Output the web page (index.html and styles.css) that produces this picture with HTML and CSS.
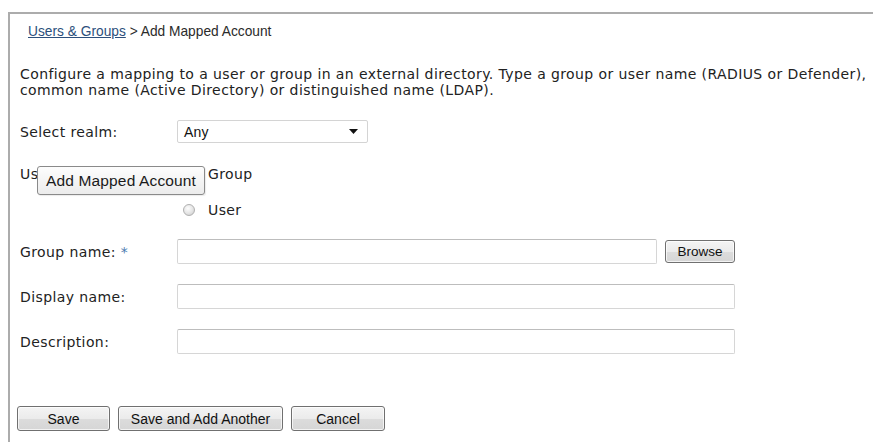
FILE: index.html
```html
<!DOCTYPE html>
<html>
<head>
<meta charset="utf-8">
<title>Add Mapped Account</title>
<link rel="stylesheet" href="styles.css">
</head>
<body>
<div class="panel">
  <div class="crumbs"><a href="#" class="crumb-link">Users &amp; Groups</a> &gt; Add Mapped Account</div>

  <p class="intro">Configure a mapping to a user or group in an external directory. Type a group or user name (RADIUS or Defender),<br>common name (Active Directory) or distinguished name (LDAP).</p>

  <div class="form">
    <div class="row row-realm">
      <label class="lbl">Select realm:</label>
      <div class="select">
        <span>Any</span>
        <svg class="caret" width="9" height="5" viewBox="0 0 9 5"><path d="M0 0h9L4.5 5z" fill="#111"/></svg>
      </div>
    </div>

    <div class="row row-type">
      <span class="lbl">User type:</span>
      <div class="radios">
        <label class="radio-opt"><span class="radio"></span>Group</label>
        <label class="radio-opt"><span class="radio"></span>User</label>
      </div>
      <div class="tooltip">Add Mapped Account</div>
    </div>

    <div class="row row-field">
      <label class="lbl">Group name: <span class="req">*</span></label>
      <div class="field-line">
        <input class="text short" type="text">
        <button class="btn browse" type="button">Browse</button>
      </div>
    </div>

    <div class="row row-field">
      <label class="lbl">Display name:</label>
      <input class="text" type="text">
    </div>

    <div class="row row-field">
      <label class="lbl">Description:</label>
      <input class="text" type="text">
    </div>
  </div>

  <div class="actions">
    <button class="btn act save" type="button">Save</button>
    <button class="btn act another" type="button">Save and Add Another</button>
    <button class="btn act cancel" type="button">Cancel</button>
  </div>
</div>
</body>
</html>
```

FILE: styles.css
```css
html, body {
  margin: 0;
  padding: 0;
  background: #fff;
}

body {
  font-family: "DejaVu Sans", Verdana, sans-serif;
  font-size: 14px;
  letter-spacing: 0.4px;
  color: #222;
}

.panel {
  margin: 12px 0 0 8px;
  border-top: 2px solid #acacac;
  border-left: 2px solid #acacac;
  min-height: 440px;
  box-sizing: border-box;
}

.crumbs {
  font-family: "Liberation Sans", Tahoma, sans-serif;
  font-size: 13.75px;
  letter-spacing: 0;
  color: #2b2b2b;
  padding: 10px 0 0 18px;
  line-height: 16px;
}

.crumb-link {
  color: #2c4f7c;
  text-decoration: underline;
}

.intro {
  margin: 26px 0 0 10px;
  line-height: 16px;
  white-space: nowrap;
}

.form {
  margin-top: 22px;
  padding-left: 10px;
}

.row {
  display: grid;
  grid-template-columns: 157px auto;
  align-items: center;
}

.lbl {
  color: #222;
  line-height: 16px;
}

.req {
  color: #4a7ab0;
}

.select {
  width: 191px;
  height: 23px;
  box-sizing: border-box;
  border: 1px solid #d4d4d4;
  border-radius: 2px;
  display: flex;
  align-items: center;
  justify-content: space-between;
  padding: 0 9px 0 6px;
  color: #111;
  font-family: "Liberation Sans", Tahoma, sans-serif;
  font-size: 14px;
  letter-spacing: 0.2px;
}

.caret {
  display: block;
}

.row-type {
  position: relative;
  margin-top: 23px;
  align-items: start;
}

.radios {
  display: flex;
  flex-direction: column;
  gap: 20px;
}

.radio-opt {
  display: flex;
  align-items: center;
  gap: 13px;
  padding-left: 6px;
  line-height: 16px;
}

.radio {
  width: 12px;
  height: 12px;
  border-radius: 50%;
  border: 1px solid #b0b0b0;
  background: radial-gradient(circle at 40% 35%, #fdfdfd 0%, #e4e4e4 55%, #c8c8c8 100%);
  box-sizing: border-box;
}

.tooltip {
  position: absolute;
  left: 17px;
  top: 0;
  font-family: "Liberation Sans", Tahoma, sans-serif;
  font-size: 15.5px;
  letter-spacing: 0.15px;
  color: #1a1a1a;
  padding: 5px 8px 5px 8px;
  border: 1px solid #8a8a8a;
  border-radius: 3px;
  background: linear-gradient(#fdfdfd, #ececec);
  box-shadow: 1px 1px 1px rgba(0,0,0,0.08);
  line-height: 17px;
}

.row-field {
  margin-top: 20px;
}

.row-type + .row-field {
  margin-top: 21px;
}

.field-line {
  display: flex;
  align-items: center;
  gap: 8px;
}

.text {
  width: 558px;
  height: 25px;
  box-sizing: border-box;
  border: 1px solid #d6d6d6;
  border-top-color: #bdbdbd;
  border-radius: 2px;
  margin: 0;
  padding: 0 4px;
  background: #fff;
}

.text.short {
  width: 480px;
}

.btn {
  font-family: "Liberation Sans", Tahoma, sans-serif;
  font-size: 14px;
  letter-spacing: 0;
  color: #111;
  border: 1px solid #707070;
  border-radius: 3px;
  background: linear-gradient(#f4f4f4 0%, #ebebeb 50%, #dcdcdc 51%, #d6d6d6 100%);
  box-shadow: inset 0 0 0 1px rgba(255,255,255,0.7);
  margin: 0;
  padding: 0;
  cursor: default;
}

.browse {
  width: 70px;
  height: 23px;
  font-size: 13.5px;
}

.actions {
  display: flex;
  gap: 8px;
  padding-left: 7px;
  margin-top: 52px;
}

.act {
  height: 25px;
}

.save {
  width: 93px;
}

.another {
  width: 165px;
}

.cancel {
  width: 94px;
}
```
